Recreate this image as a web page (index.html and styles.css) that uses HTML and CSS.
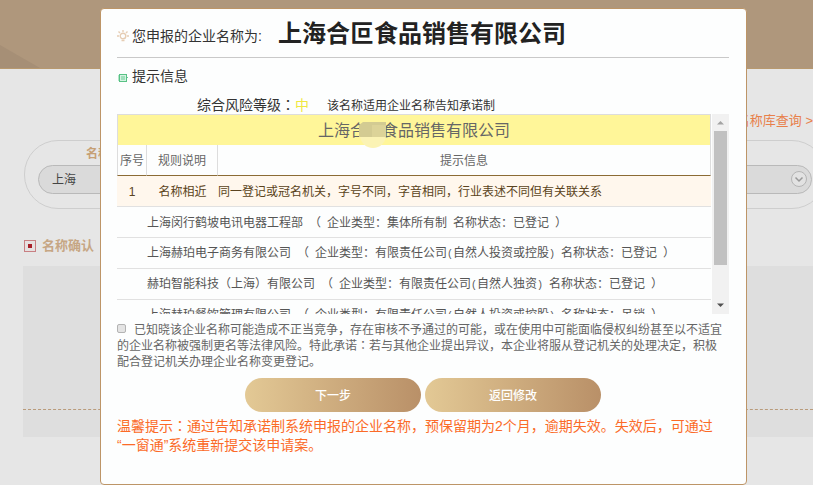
FILE: index.html
```html
<!DOCTYPE html>
<html lang="zh-CN">
<head>
<meta charset="utf-8">
<title>企业名称申报</title>
<link rel="stylesheet" href="styles.css">
</head>
<body>
<div class="page">
  <header class="banner">
    <svg class="banner-art" viewBox="0 0 40 68" aria-hidden="true"><path d="M0 45L40 68H0Z" fill="#a68f76"/></svg>
  </header>
  <main class="content">
    <a class="library-link" href="#">名称库查询 &gt;</a>
    <form class="name-form">
      <label class="name-label" for="region">名称</label>
      <div class="select-wrap">
        <select id="region" class="region"><option>上海</option></select>
        <svg class="chevron" viewBox="0 0 18 18" aria-hidden="true"><circle cx="9" cy="9" r="7.500" fill="#e2e2e2" stroke="#b5b5b5"/><path d="M5.500 7.500L9 11L12.500 7.500" fill="none" stroke="#999" stroke-width="1.500"/></svg>
      </div>
    </form>
    <h2 class="section-title">
      <svg class="section-icon" viewBox="0 0 12 12" aria-hidden="true"><rect x=".5" y=".5" width="11" height="11" fill="#e6e0e0" stroke="#c87f82"/><rect x="4" y="4" width="4" height="4" fill="#a81f28"/></svg>
      名称确认
    </h2>
    <section class="confirm"><div class="confirm-body"></div><div class="confirm-foot"></div></section>
  </main>
</div>

<div class="overlay">
  <div class="modal" role="dialog" aria-labelledby="company">
    <div class="modal-head">
      <svg class="bulb" viewBox="0 0 12 12" aria-hidden="true"><g fill="none" stroke="#e6cdb4" stroke-width="1.400"><circle cx="6" cy="6" r="2.800"/><path d="M6 0V2M0 6H2M10 6H12M1.500 1.500L3 3M10.500 1.500L9 3M4.500 10.500H7.500"/></g></svg>
      <span class="head-label">您申报的企业名称为:</span>
      <h1 id="company" class="company">上海合叵食品销售有限公司</h1>
    </div>
    <h2 class="info-title">
      <svg class="info-icon" viewBox="0 0 10 10" aria-hidden="true"><rect x="1.500" y="1.500" width="7" height="7" fill="#d5f3e2" stroke="#58c285"/><path d="M3 4H7M3 6H7M0 3H1M0 5H1M0 7H1M9 4.500H10" stroke="#6bcb94"/></svg>
      提示信息
    </h2>
    <p class="risk"><span class="risk-label">综合风险等级<span class="colon" lang="ja">：</span><b class="level">中</b></span><span class="risk-note">该名称适用企业名称告知承诺制</span></p>
    <div class="scroller">
      <div class="viewport">
        <div class="matched"><span>上海合叵食品销售有限公司</span>
          <svg class="smudge" viewBox="0 0 28 30" aria-hidden="true"><circle cx="15" cy="15" r="13" fill="#fbf3b4"/><path d="M1 5L5 2H28V17H1Z" fill="#d3cb92"/><path d="M14 5H28V17H14Z" fill="#dcd398"/></svg>
        </div>
        <table class="rules">
          <thead><tr><th class="col-no">序号</th><th class="col-rule">规则说明</th><th>提示信息</th></tr></thead>
          <tbody>
            <tr class="hit"><td class="center">1</td><td class="center">名称相近</td><td>同一登记或冠名机关，字号不同，字音相同，行业表述不同但有关联关系</td></tr>
            <tr><td></td><td colspan="2">上海闵行鹤坡电讯电器工程部&ensp;（&ensp;企业类型：集体所有制&ensp;名称状态：已登记&ensp;）</td></tr>
            <tr><td></td><td colspan="2">上海赫珀电子商务有限公司&ensp;（&ensp;企业类型：有限责任公司<span class="half">(</span>自然人投资或控股<span class="half">)</span>&ensp;名称状态：已登记&ensp;）</td></tr>
            <tr><td></td><td colspan="2">赫珀智能科技（上海）有限公司&ensp;（&ensp;企业类型：有限责任公司<span class="half">(</span>自然人独资<span class="half">)</span>&ensp;名称状态：已登记&ensp;）</td></tr>
            <tr><td></td><td colspan="2">上海赫珀餐饮管理有限公司&ensp;（&ensp;企业类型：有限责任公司<span class="half">(</span>自然人投资或控股<span class="half">)</span>&ensp;名称状态：吊销&ensp;）</td></tr>
          </tbody>
        </table>
      </div>
      <div class="scrollbar" aria-hidden="true">
        <svg class="arrow" viewBox="0 0 17 17"><path d="M5 10.500L8.500 7L12 10.500Z" fill="#a3a3a3"/></svg>
        <div class="thumb"></div>
        <svg class="arrow" viewBox="0 0 17 17"><path d="M5 6.500L8.500 10L12 6.500Z" fill="#505050"/></svg>
      </div>
    </div>
    <p class="pledge"><input type="checkbox" id="agree" class="agree"><label for="agree">已知晓该企业名称可能造成不正当竞争，存在审核不予通过的可能，或在使用中可能面临侵权纠纷甚至以不适宜的企业名称被强制更名等法律风险。特此承诺<span class="colon" lang="ja">：</span>若与其他企业提出异议，本企业将服从登记机关的处理决定，积极配合登记机关办理企业名称变更登记。</label></p>
    <div class="actions"><button type="button" class="btn">下一步</button><button type="button" class="btn">返回修改</button></div>
    <p class="tip">温馨提示<span class="colon" lang="ja">：</span>通过告知承诺制系统申报的企业名称，预保留期为2个月，逾期失效。失效后，可通过“一窗通”系统重新提交该申请案。</p>
  </div>
</div>
</body>
</html>
```
FILE: styles.css
```css
* { box-sizing: border-box; }
html { height: 100%; overflow: hidden; }
body {
  height: 100%;
  margin: 0;
  overflow: hidden;
  background: #e6e6e6;
  color: #333;
  font: 12px/16px "Liberation Sans", "Noto Sans CJK SC", sans-serif;
}
h1, h2, p { margin: 0; font-weight: normal; }

.banner {
  display: flex;
  height: 69px;
  background: #af977c;
  border-bottom: 1px solid #b8996f;
}
.banner-art { width: 40px; height: 68px; }
.content { padding-left: 23px; }
.library-link {
  display: block;
  padding: 42px 0 0;
  line-height: 20px;
  font-size: 13px;
  color: #e8804a;
  text-align: right;
  text-decoration: none;
}
.name-form {
  height: 69px;
  margin: 9px -13px 0 1px;
  padding: 4px 13px 0;
  border: 1px solid #cecece;
  border-radius: 34px;
}
.name-label {
  display: block;
  padding-left: 48px;
  line-height: 18px;
  font-weight: bold;
  color: #c6a075;
}
.select-wrap { position: relative; margin-top: 2px; }
.region {
  display: block;
  width: 100%;
  height: 29px;
  padding: 0 13px;
  appearance: none;
  border: 1px solid #b9b9b9;
  border-radius: 15px;
  background: #dadada;
  color: #444;
  font: inherit;
}
.chevron { position: absolute; top: 5px; right: 4px; width: 18px; height: 18px; }
.section-title {
  display: flex;
  align-items: center;
  gap: 6px;
  margin: 27px 0 10px 0;
  padding-left: 1px;
  line-height: 20px;
  font-size: 13px;
  font-weight: bold;
  color: #c6a684;
}
.section-icon { width: 12px; height: 12px; }
.confirm { background: #dedede; }
.confirm-body { height: 144px; border-bottom: 1px dashed #b99b7b; }
.confirm-foot { height: 27px; }

.overlay {
  position: fixed;
  inset: 0;
  display: flex;
  padding: 8px 66px 0 100px;
}
.modal {
  flex: 1;
  min-width: 0;
  padding: 0 17px 0 16px;
  border: 1px solid #bd9567;
  border-radius: 4px;
  background: #fdfefe;
}
.modal-head {
  display: flex;
  align-items: center;
  height: 49px;
  padding-top: 2px;
  border-bottom: 1px solid #c9c9c9;
}
.bulb { width: 12px; height: 12px; margin: 4px 3px 0 0; }
.head-label { padding-top: 4px; font-size: 14px; }
.company {
  margin-left: 16px;
  line-height: 32px;
  font-size: 24px;
  font-weight: bold;
  color: #222;
}
.info-title {
  display: flex;
  align-items: center;
  gap: 4px;
  padding-left: 1px;
  height: 36px;
  font-size: 14px;
}
.info-icon { width: 10px; height: 10px; margin-top: 4px; }
.risk {
  display: flex;
  align-items: baseline;
  gap: 18px;
  height: 20px;
  padding-left: 80px;
  line-height: 22px;
}
.risk-label { font-size: 14px; }
.level { font-weight: normal; color: #f0e840; }
.colon { font-family: "Noto Sans CJK JP", sans-serif; }

.scroller { display: flex; height: 200px; overflow: hidden; }
.viewport { flex: 1; min-width: 0; margin-right: 1px; overflow: hidden; }
.matched {
  position: relative;
  height: 31px;
  border: 1px solid #ddd;
  border-bottom: 0;
  background: #fff699;
  line-height: 32px;
  font-size: 16px;
  text-align: center;
  color: #666;
}
.smudge { position: absolute; top: 5px; left: 50%; width: 28px; height: 30px; margin-left: -56px; }
.rules { width: 100%; border-collapse: separate; border-spacing: 0; table-layout: fixed; }
.rules th {
  height: 31px;
  padding: 1px 0 0;
  border-right: 1px solid #ddd;
  border-bottom: 1px solid #8b6b35;
  font-weight: normal;
  color: #666;
}
.rules th:first-child { border-left: 1px solid #ddd; }
.rules td {
  height: 31px;
  padding: 2px 0 0;
  border-bottom: 1px solid #e1e1e1;
  white-space: nowrap;
  color: #555;
}
.col-no { width: 30px; }
.col-rule { width: 71px; }
.rules .center { text-align: center; }
.rules .hit td { background: #fff7ed; color: #5a4320; }
.half { font-family: "Liberation Mono", monospace; font-size: 10px; }
.scrollbar { display: flex; flex-direction: column; width: 17px; background: #f1f1f1; }
.arrow { width: 17px; height: 17px; }
.thumb { height: 134px; margin: 0 2px 32px; background: #c1c1c1; }

.pledge { padding: 8px 4px 0 0; color: #666; }
.agree {
  width: 9px;
  height: 9px;
  margin: 0 8px 0 0;
  vertical-align: 1px;
  appearance: none;
  border: 1px solid #b3b3b3;
  border-radius: 2px;
  background: #e4e4e4;
}
.colon { line-height: 1; }
.actions { display: flex; justify-content: center; gap: 4px; padding-top: 8px; }
.btn {
  width: 176px;
  height: 34px;
  border: 0;
  border-radius: 17px;
  background: linear-gradient(90deg, #e3c995, #b99068);
  color: #fff;
  font: 500 12px/16px "Noto Sans CJK SC", sans-serif;
}
.tip { padding-top: 5px; line-height: 19px; font-size: 14px; color: #fb6b28; }
```
